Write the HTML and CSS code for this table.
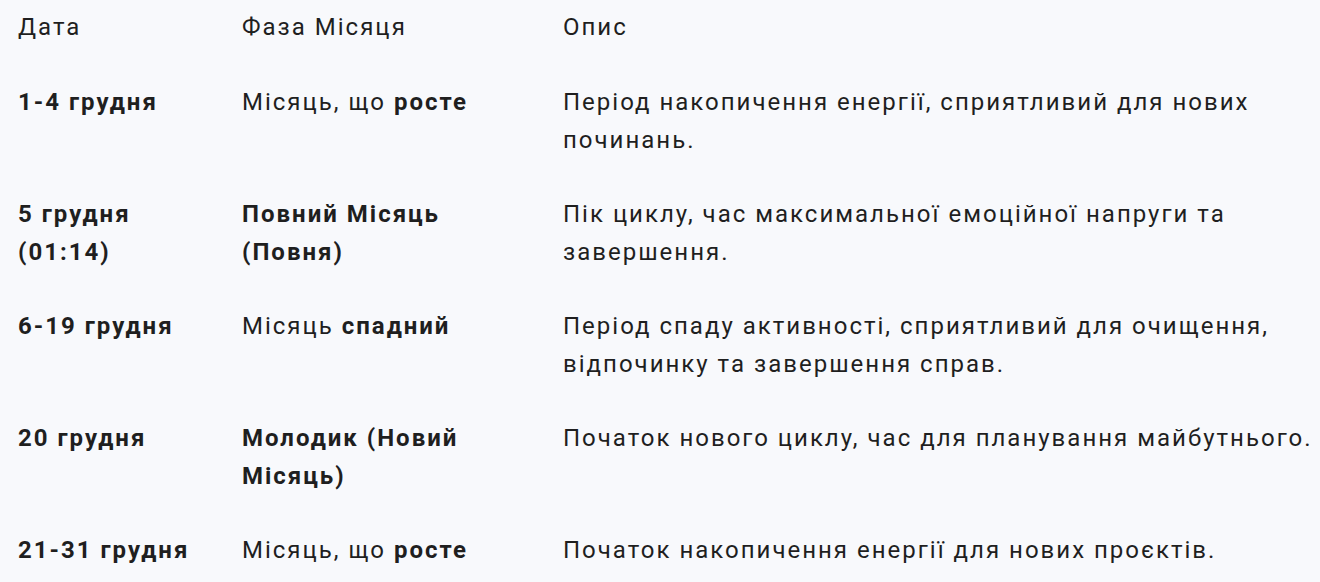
FILE: index.html
```html
<!DOCTYPE html>
<html lang="uk">
<head>
<meta charset="utf-8">
<link rel="stylesheet" href="styles.css">
</head>
<body>
<div class="table">
  <div class="row head">
    <div class="cell">Дата</div>
    <div class="cell">Фаза Місяця</div>
    <div class="cell">Опис</div>
  </div>
  <div class="row">
    <div class="cell"><b>1-4 грудня</b></div>
    <div class="cell">Місяць, що <b>росте</b></div>
    <div class="cell">Період накопичення енергії, сприятливий для нових починань.</div>
  </div>
  <div class="row">
    <div class="cell"><b>5 грудня (01:14)</b></div>
    <div class="cell"><b>Повний Місяць (Повня)</b></div>
    <div class="cell">Пік циклу, час максимальної емоційної напруги та завершення.</div>
  </div>
  <div class="row">
    <div class="cell"><b>6-19 грудня</b></div>
    <div class="cell">Місяць <b>спадний</b></div>
    <div class="cell">Період спаду активності, сприятливий для очищення, відпочинку та завершення справ.</div>
  </div>
  <div class="row">
    <div class="cell"><b>20 грудня</b></div>
    <div class="cell"><b>Молодик (Новий Місяць)</b></div>
    <div class="cell">Початок нового циклу, час для планування майбутнього.</div>
  </div>
  <div class="row">
    <div class="cell"><b>21-31 грудня</b></div>
    <div class="cell">Місяць, що <b>росте</b></div>
    <div class="cell">Початок накопичення енергії для нових проєктів.</div>
  </div>
</div>
</body>
</html>
```

FILE: styles.css
```css
html, body {
  margin: 0;
  padding: 0;
  background: #f8f9fc;
}
body {
  font-family: Roboto, "Noto Sans", sans-serif;
  font-size: 24px;
  line-height: 38px;
  letter-spacing: 2px;
  color: #1f1f1f;
}
.table {
  display: flex;
  flex-direction: column;
  padding: 8px 0 0 18px;
}
.row {
  display: grid;
  grid-template-columns: 224px 321px 1fr;
  padding: 18px 0;
}
.row.head {
  padding: 0 0 19px;
}
.cell {
  padding-right: 16px;
}
.cell:last-child {
  padding-right: 0;
}
b {
  font-weight: 700;
}
```
